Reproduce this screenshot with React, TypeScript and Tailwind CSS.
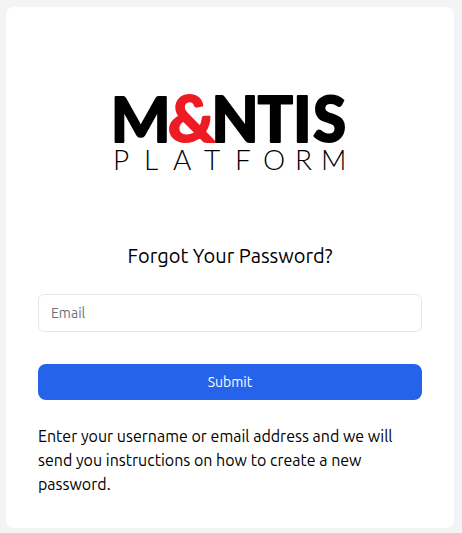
import { useState } from 'react'

function MantisLogo() {
  return (
    <svg viewBox="0 0 384 179" role="img" aria-label="M&NTIS Platform" className="block w-full">
      <text y="103" fontSize="70" fontWeight="700" fill="#000" stroke="#000" strokeWidth="2" strokeLinejoin="round" className="font-['Carlito','Lato',sans-serif]">
        <tspan x="73" fontSize="68">M</tspan>
        <tspan x="130" fontSize="66" fill="#ed1c24" stroke="#ed1c24">&amp;</tspan>
        <tspan x="174">N</tspan>
        <tspan x="220">T</tspan>
        <tspan x="255">I</tspan>
        <tspan x="275">S</tspan>
      </text>
      <text x="75 106 135 166 197 225 257 283" y="131" fontSize="28" fontWeight="300" fill="#000" className="font-['Lato',sans-serif]">
        PLATFORM
      </text>
    </svg>
  )
}

export default function App() {
  const [email, setEmail] = useState('')

  return (
    <main className="min-h-screen bg-gray-100 pt-[7px] pr-2 pb-1 pl-[6px] font-['Ubuntu','Noto_Sans',sans-serif] text-black">
      <div className="mx-auto max-w-md rounded-lg bg-white p-8">
        <form className="flex flex-col" onSubmit={e => e.preventDefault()}>
          <MantisLogo />
          <h1 className="mt-6 text-center text-xl">Forgot Your Password?</h1>
          <input
            type="email"
            aria-label="Email"
            placeholder="Email"
            value={email}
            onChange={e => setEmail(e.target.value)}
            className="mt-6 w-full rounded-md border border-gray-200 px-3 py-2 text-sm placeholder-gray-500 focus:outline-none focus:ring-2 focus:ring-blue-600"
          />
          <button
            type="submit"
            className="mt-8 w-full rounded-lg bg-[#2563eb] px-4 py-2 text-sm text-white transition-colors hover:bg-blue-700"
          >
            Submit
          </button>
        </form>
        <p className="mt-6 text-base">
          Enter your username or email address and we will send you instructions on how to create a new password.
        </p>
      </div>
    </main>
  )
}
